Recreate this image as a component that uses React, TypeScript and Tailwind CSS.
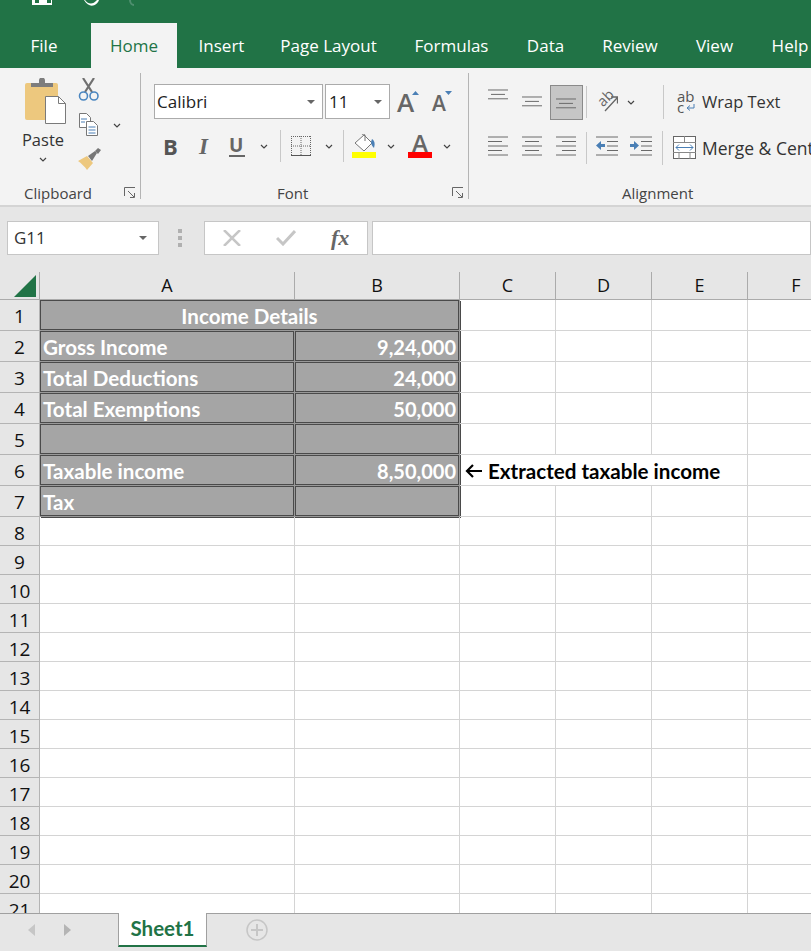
const rows: { n: number; a?: string; b?: string; note?: string }[] = [
  { n: 2, a: "Gross Income", b: "9,24,000" },
  { n: 3, a: "Total Deductions", b: "24,000" },
  { n: 4, a: "Total Exemptions", b: "50,000" },
  { n: 5 },
  { n: 6, a: "Taxable income", b: "8,50,000", note: "Extracted taxable income" },
  { n: 7, a: "Tax" },
];

const tabs = [
  { label: "File", width: "w-[88px] mr-[3px]" },
  { label: "Home", width: "w-[86px]", active: true },
  { label: "Insert", width: "w-[89px]" },
  { label: "Page Layout", width: "w-[125px]" },
  { label: "Formulas", width: "w-[121px]" },
  { label: "Data", width: "w-[67px]" },
  { label: "Review", width: "w-[102px]" },
  { label: "View", width: "w-[67px]" },
  { label: "Help", width: "w-[84px]" },
];

const emptyRows = [8, 9, 10, 11, 12, 13, 14, 15, 16, 17, 18, 19, 20];

function Chevron({ className = "" }: { className?: string }) {
  return (
    <svg width="8" height="5" viewBox="0 0 8 5" className={className}>
      <path d="M1 1l3 3 3-3" fill="none" stroke="#444" strokeWidth="1.2" />
    </svg>
  );
}

function Caret({ className = "" }: { className?: string }) {
  return (
    <svg width="8" height="4" viewBox="0 0 8 4" className={className}>
      <path d="M0 0h8L4 4z" fill="#666" />
    </svg>
  );
}

function Launcher() {
  return (
    <svg width="12" height="12" viewBox="0 0 12 12">
      <path d="M.5 9V.5H11M4 4l6 6M6 10.5h4.500V6" fill="none" stroke="#666" strokeWidth="1" />
    </svg>
  );
}

// lines: [x1, x2] per row, drawn from top at a fixed step
function Lines({ lines, w = 21, step = 4.5, arrow }: { lines: [number, number][]; w?: number; step?: number; arrow?: "in" | "out" }) {
  return (
    <svg width={w} height={lines.length * step + 1} viewBox={`0 0 ${w} ${lines.length * step + 1}`}>
      {lines.map(([a, b], i) => (
        <path key={i} d={`M${a} ${i * step + 1}H${b}`} stroke="#6a6a6a" strokeWidth="1" />
      ))}
      {arrow === "in" && <path d="M0 9.500l5-4.500v3h4v3H5v3z" fill="#4a7fb5" />}
      {arrow === "out" && <path d="M9 9.500l-5-4.500v3H0v3h4v3z" fill="#4a7fb5" />}
    </svg>
  );
}

function ClipboardIcons() {
  return (
    <div className="flex w-[141px] shrink-0 border-r border-[#b4b4b4] h-[126px]">
      <div className="flex flex-col items-center w-[86px] pt-[5px]">
        <svg width="42" height="46" viewBox="0 0 42 46" className="ml-[6px]">
          <rect x="0" y="5" width="33" height="37" rx="2" fill="#edc87e" />
          <path d="M6 9V5h8V2.500a2.500 2.500 0 0 1 6 0V5h8v4z" fill="#7d7d7d" />
          <path d="M20.500 18.500h13l7 7v20h-20z" fill="#fff" stroke="#7a7a7a" strokeWidth="1" />
          <path d="M33.500 18.500v7h7" fill="none" stroke="#7a7a7a" strokeWidth="1" />
        </svg>
        <span className="mt-[5px] text-[16.500px] leading-[22px] text-[#333]">Paste</span>
        <Chevron className="mt-[6px]" />
      </div>
      <div className="flex flex-col w-[54px] -ml-[8px] pt-[5px]">
        <svg width="22" height="23" viewBox="0 0 22 23">
          <path d="M5 0l9 14M16 0L7 14" stroke="#707070" strokeWidth="2.200" fill="none" />
          <circle cx="5.500" cy="18" r="4" fill="none" stroke="#4a86c0" strokeWidth="1.600" />
          <circle cx="16" cy="18" r="4" fill="none" stroke="#4a86c0" strokeWidth="1.600" />
        </svg>
        <div className="flex items-center mt-[12px]">
          <svg width="22" height="23" viewBox="0 0 22 23">
            <path d="M1.500.5h7l4 4v10h-11z" fill="#fff" stroke="#777" />
            <path d="M8.500 8.500h7l4 4v10h-11z" fill="#fff" stroke="#777" />
            <path d="M3 6h6M3 9h4M10.500 14h7M10.500 17h7M10.500 20h7" stroke="#4a7fb5" />
          </svg>
          <Chevron className="ml-[13px] mt-[1px]" />
        </div>
        <svg width="24" height="23" viewBox="0 0 24 23" className="mt-[12px]">
          <path d="M0 13l9-5 6 7-6 7c-2-3-6-7-9-9z" fill="#edc87e" />
          <path d="M10 8l7-5 2 2-5 8z" fill="#777" />
          <path d="M17 3l3-3 3 2-3 4z" fill="#777" />
        </svg>
      </div>
    </div>
  );
}

function FontIcons() {
  return (
    <div className="flex flex-col w-[328px] shrink-0 border-r border-[#b4b4b4] h-[126px] pl-[13px]">
      <div className="flex items-center mt-[11px]">
        <div className="flex items-center justify-between w-[169px] h-[35px] bg-white border border-[#ababab] pl-[2px] pr-[7px] text-[17px] text-[#222]">
          Calibri
          <Caret />
        </div>
        <div className="flex items-center justify-between w-[65px] h-[35px] ml-[2px] bg-white border border-[#ababab] pl-[3px] pr-[7px] text-[17px] text-[#222]">
          11
          <Caret />
        </div>
        <div className="flex items-start w-[24px] ml-[7px] h-[28px]">
          <span className="text-[26px] font-semibold leading-[28px] text-[#666]">A</span>
          <svg width="7" height="4" viewBox="0 0 7 4" className="mt-[3px] -ml-[2px] shrink-0">
            <path d="M0 4l3.500-4L7 4z" fill="#4a7fb5" />
          </svg>
        </div>
        <div className="flex items-start w-[24px] ml-[11px] h-[28px]">
          <span className="text-[21px] font-semibold leading-[30px] text-[#666]">A</span>
          <svg width="7" height="4" viewBox="0 0 7 4" className="mt-[3px] -ml-[1px] shrink-0">
            <path d="M0 0h7L3.500 4z" fill="#4a7fb5" />
          </svg>
        </div>
      </div>
      <div className="flex items-center h-[36px] mt-[9px]">
        <span className="w-[17px] ml-[9px] text-[22px] font-bold leading-none text-[#555]">B</span>
        <span className="w-[15px] ml-[19px] font-['Liberation_Serif',serif] text-[23px] font-bold italic leading-none text-[#666]">I</span>
        <span className="w-[16px] ml-[15px] border-b-2 border-[#666] text-[19px] font-bold leading-[20px] text-[#666]">U</span>
        <Chevron className="ml-[15px]" />
        <div className="w-px h-[32px] ml-[12px] bg-[#c8c8c8]" />
        <svg width="22" height="22" viewBox="0 0 22 22" className="ml-[9px]">
          <path d="M1 1.500h20M1 11h20M1 20.500h20M1.500 1v20M11 1v20M20.500 1v20" stroke="#666" strokeWidth="1" strokeDasharray="1 1" fill="none" />
          <path d="M1 20.500h20" stroke="#555" />
        </svg>
        <Chevron className="ml-[13px]" />
        <div className="w-px h-[32px] ml-[10px] bg-[#c8c8c8]" />
        <div className="flex flex-col items-center ml-[8px]">
          <svg width="24" height="18" viewBox="0 0 24 18">
            <path d="M3 9l9-8 8 8-8 8z" fill="#fff" stroke="#777" />
            <path d="M10 1c0-1 3-1 3 0v6" fill="none" stroke="#777" />
            <path d="M20 5c3 2 3 5 2 9-2-2-3-4-3-6z" fill="#4a7fb5" />
          </svg>
          <div className="w-[24px] h-[6px] bg-[#ffff00]" />
        </div>
        <Chevron className="ml-[11px]" />
        <div className="flex flex-col items-center ml-[13px]">
          <span className="h-[18px] text-[24px] font-semibold leading-[18px] text-[#666]">A</span>
          <div className="w-[24px] h-[6px] bg-[#ff0000]" />
        </div>
        <Chevron className="ml-[11px]" />
      </div>
    </div>
  );
}

function AlignmentIcons() {
  return (
    <div className="flex flex-col h-[126px] pl-[19px] text-[#333]">
      <div className="flex items-center h-[36px] mt-[11px]">
        <div className="flex items-start w-[34px] h-[34px] pt-[4px]">
          <Lines w={21} step={4.400} lines={[[0, 20], [3, 17], [0, 20]]} />
        </div>
        <div className="flex items-center w-[28px] h-[34px] pt-[3px]">
          <Lines w={21} step={4.400} lines={[[0, 20], [3, 17], [0, 20]]} />
        </div>
        <div className="flex items-end justify-center w-[33px] h-[35px] pb-[6px] bg-[#c6c6c6] border border-[#8a8a8a]">
          <Lines w={21} step={4.400} lines={[[0, 20], [3, 17], [0, 20]]} />
        </div>
        <div className="w-px h-[32px] ml-[3px] bg-[#c8c8c8]" />
        <div className="relative w-[21px] h-[22px] ml-[10px]">
          <span className="absolute left-0 top-[-1px] -rotate-45 text-[14.500px] leading-[16px] text-[#666]">ab</span>
          <svg width="21" height="22" viewBox="0 0 21 22" className="absolute left-0 top-0">
            <path d="M8 20L20 7M14 6h6.500v6.500" fill="none" stroke="#666" strokeWidth="1.300" />
          </svg>
        </div>
        <Chevron className="ml-[9px]" />
        <div className="w-px h-[34px] ml-[28px] bg-[#c8c8c8]" />
        <div className="flex flex-col ml-[13px] w-[19px] text-[#555] leading-[11px] text-[15px]">
          <span>ab</span>
          <span className="flex items-center">
            c
            <svg width="9" height="8" viewBox="0 0 9 8" className="ml-[2px]">
              <path d="M8 0v4H2M4 1.500L1 4l3 2.500" fill="none" stroke="#4a7fb5" />
            </svg>
          </span>
        </div>
        <span className="ml-[6px] text-[16.500px] whitespace-nowrap">Wrap Text</span>
      </div>
      <div className="flex items-center h-[36px] mt-[10px]">
        <div className="w-[34px]">
          <Lines lines={[[0, 20], [0, 14], [0, 20], [0, 14], [0, 20]]} />
        </div>
        <div className="w-[34px]">
          <Lines lines={[[0, 20], [3, 17], [0, 20], [3, 17], [0, 20]]} />
        </div>
        <div className="w-[30px]">
          <Lines lines={[[0, 20], [6, 20], [0, 20], [6, 20], [0, 20]]} />
        </div>
        <div className="w-px h-[32px] bg-[#c8c8c8]" />
        <div className="ml-[9px]">
          <Lines w={23} lines={[[0, 22], [11, 22], [11, 22], [11, 22], [0, 22]]} arrow="in" />
        </div>
        <div className="ml-[11px]">
          <Lines w={23} lines={[[0, 22], [11, 22], [11, 22], [11, 22], [0, 22]]} arrow="out" />
        </div>
        <div className="w-px h-[34px] ml-[9px] bg-[#c8c8c8]" />
        <svg width="24" height="24" viewBox="0 0 24 24" className="ml-[10px]">
          <rect x=".5" y=".5" width="22" height="22" fill="#fff" stroke="#666" />
          <path d="M0 6.500h23M0 16.500h23M11.500 0v6M6 16v7M17 16v7" stroke="#888" fill="none" />
          <path d="M3 11.500h17M6 8.500l-3 3 3 3M17 8.500l3 3-3 3" stroke="#4a7fb5" fill="none" />
        </svg>
        <span className="ml-[5px] text-[17.500px] whitespace-nowrap">Merge &amp; Center</span>
      </div>
    </div>
  );
}

function Ribbon() {
  return (
    <div className="relative h-[137px] bg-[#f3f3f3] overflow-hidden pt-[5px]">
      <div className="flex h-[126px]">
        <ClipboardIcons />
        <FontIcons />
        <AlignmentIcons />
      </div>
      <div className="absolute left-0 right-0 bottom-0 h-[24px] flex text-[15px] text-[#444] leading-[24px]">
        <div className="flex items-center justify-between w-[141px] pl-[24px] pr-[5px]">
          <span>Clipboard</span>
          <Launcher />
        </div>
        <div className="flex items-center justify-between w-[328px] pl-[136px] pr-[5px]">
          <span>Font</span>
          <Launcher />
        </div>
        <span className="ml-[153px]">Alignment</span>
      </div>
    </div>
  );
}

function FormulaBar() {
  return (
    <div className="flex items-center h-[66px] bg-[#e6e6e6] border-t-2 border-[#d4d4d4] pl-[7px] pb-[2px]">
      <div className="flex items-center justify-between w-[152px] h-[34px] bg-white border border-[#c6c6c6] pl-[6px] pr-[11px] text-[17px] text-[#333]">
        G11
        <Caret />
      </div>
      <div className="flex flex-col gap-[3px] ml-[19px]">
        <div className="w-[4px] h-[4px] bg-[#b0b0b0]" />
        <div className="w-[4px] h-[4px] bg-[#b0b0b0]" />
        <div className="w-[4px] h-[4px] bg-[#b0b0b0]" />
      </div>
      <div className="flex items-center w-[164px] h-[34px] ml-[22px] bg-white border border-[#c6c6c6]">
        <svg width="18" height="16" viewBox="0 0 18 16" className="ml-[18px]">
          <path d="M1 0l16 16M17 0L1 16" stroke="#c6c6c6" strokeWidth="2.500" />
        </svg>
        <svg width="20" height="16" viewBox="0 0 20 16" className="ml-[35px]">
          <path d="M1 8l6 6L19 1" fill="none" stroke="#c6c6c6" strokeWidth="3" />
        </svg>
        <span className="ml-[35px] font-['Liberation_Serif',serif] text-[22px] font-bold italic leading-none text-[#666]">fx</span>
      </div>
      <div className="flex-1 h-[34px] ml-[4px] bg-white border border-[#c6c6c6]" />
    </div>
  );
}

function Cell({ className = "", children }: { className?: string; children?: React.ReactNode }) {
  return <div className={`shrink-0 h-full border-r border-b border-[#d4d4d4] ${className}`}>{children}</div>;
}

function RowHead({ n, className = "" }: { n: number; className?: string }) {
  return (
    <div className={`flex items-center justify-center w-[40px] shrink-0 h-full bg-[#e6e6e6] border-r border-b border-[#b4b4b4] text-[19px] text-[#111] ${className}`}>
      {n}
    </div>
  );
}

// the bordered cells show dark / light / dark between neighbours
function GreyCell({ className = "", align = "", children, size = "text-[20.600px]" }: { className?: string; align?: string; size?: string; children?: React.ReactNode }) {
  return (
    <div className={`h-full shrink-0 border-r border-b border-[#999999] shadow-[1px_1px_0_#4a4a4a] ${className}`}>
      <div className={`flex items-center h-full bg-[#a5a5a5] border border-[#4a4a4a] pt-[2px] font-['Lato',sans-serif] ${size} font-bold text-white px-[2px] whitespace-nowrap ${align}`}>
        {children}
      </div>
    </div>
  );
}

function Grid() {
  return (
    <div className="relative h-[642px] overflow-hidden bg-white">
      <div className="flex h-[29px] pt-[1px] bg-[#e6e6e6] border-b border-[#ababab] text-[18px] text-[#111]">
        <div className="flex items-center justify-end w-[40px] shrink-0 border-r border-[#ababab] pr-[3px]">
          <svg width="22" height="22" viewBox="0 0 22 22">
            <path d="M0 22L22 0v22z" fill="#217346" />
          </svg>
        </div>
        <div className="flex items-center justify-center w-[255px] shrink-0 border-r border-[#ababab]">A</div>
        <div className="flex items-center justify-center w-[165px] shrink-0 border-r border-[#ababab]">B</div>
        <div className="flex items-center justify-center w-[96px] shrink-0 border-r border-[#ababab]">C</div>
        <div className="flex items-center justify-center w-[96px] shrink-0 border-r border-[#ababab]">D</div>
        <div className="flex items-center justify-center w-[96px] shrink-0 border-r border-[#ababab]">E</div>
        <div className="flex items-center justify-center w-[96px] shrink-0">F</div>
      </div>
      <div className="flex h-[31px]">
        <RowHead n={1} className="pt-[2px]" />
        <GreyCell className="w-[420px]" align="justify-center">Income Details</GreyCell>
        <Cell className="w-[96px]" />
        <Cell className="w-[96px]" />
        <Cell className="w-[96px]" />
        <Cell className="w-[96px]" />
      </div>
      {rows.map((r) => (
        <div key={r.n} className="flex h-[31px]">
          <RowHead n={r.n} className="pt-[2px]" />
          <GreyCell className="w-[255px]">{r.a}</GreyCell>
          <GreyCell className="w-[165px]" align="justify-end" size="text-[20px]">{r.b}</GreyCell>
          {r.note ? (
            <Cell className="flex items-center w-[288px] pl-[5px] pt-[2px] font-['Lato',sans-serif] text-[20.600px] font-bold text-black whitespace-nowrap">
              <svg width="17" height="14" viewBox="0 0 17 14" className="mr-[6px]">
                <path d="M17 7H2M8 1L2 7l6 6" fill="none" stroke="#000" strokeWidth="2.200" />
              </svg>
              {r.note}
            </Cell>
          ) : (
            <>
              <Cell className="w-[96px]" />
              <Cell className="w-[96px]" />
              <Cell className="w-[96px]" />
            </>
          )}
          <Cell className="w-[96px]" />
        </div>
      ))}
      {[...emptyRows, 21].map((n) => (
        <div key={n} className="flex h-[29px]">
          <RowHead n={n} className="pt-[4px]" />
          <Cell className="w-[255px]" />
          <Cell className="w-[165px]" />
          <Cell className="w-[96px]" />
          <Cell className="w-[96px]" />
          <Cell className="w-[96px]" />
          <Cell className="w-[96px]" />
        </div>
      ))}
    </div>
  );
}

function SheetBar() {
  return (
    <div className="flex h-[35px] bg-[#e6e6e6] border-t border-[#a0a0a0]">
      <svg width="8" height="12" viewBox="0 0 8 12" className="ml-[28px] mt-[10px]">
        <path d="M7 0v12L0 6z" fill="#c6c6c6" />
      </svg>
      <svg width="8" height="12" viewBox="0 0 8 12" className="ml-[27px] mt-[10px]">
        <path d="M1 0v12l7-6z" fill="#b4b4b4" />
      </svg>
      <div className="flex items-center justify-center w-[89px] h-[34px] ml-[47px] -mt-px pb-[2px] bg-white border-x border-[#a0a0a0] border-b-2 border-b-[#217346] font-['Lato',sans-serif] text-[20.500px] font-bold text-[#217346]">
        Sheet1
      </div>
      <svg width="22" height="22" viewBox="0 0 22 22" className="ml-[39px] mt-[5px]">
        <circle cx="11" cy="11" r="10" fill="none" stroke="#c6c6c6" strokeWidth="1.500" />
        <path d="M11 5v12M5 11h12" stroke="#c6c6c6" strokeWidth="2" />
      </svg>
    </div>
  );
}

export default function App() {
  return (
    <div className="w-[811px] h-[951px] overflow-hidden bg-[#f3f3f3] font-['Open_Sans',sans-serif]">
      <div className="flex items-end h-[23px] bg-[#217346] overflow-hidden">
        <svg width="160" height="23" viewBox="0 0 160 23" className="self-start">
          <path d="M32 0h3v3h4V0h8v3h4V0h1v5H32z" fill="#fff" />
          <path d="M85 0c2 3 7 6 12 0l2 0c-2 6-10 9-15 0z" fill="#fff" />
          <path d="M130 0c0 3 2 5 4 5" fill="none" stroke="#4f8f6f" strokeWidth="2" />
        </svg>
      </div>
      <div className="flex h-[45px] bg-[#217346] overflow-hidden">
        {tabs.map((t) => (
          <div
            key={t.label}
            className={`flex items-center justify-center shrink-0 text-[17px] ${t.width} ${
              t.active ? "bg-[#f3f3f3] text-[#217346]" : "text-white"
            }`}
          >
            {t.label}
          </div>
        ))}
      </div>
      <Ribbon />
      <FormulaBar />
      <Grid />
      <SheetBar />
      <div className="h-[3px] bg-[#e6e6e6]" />
    </div>
  );
}
